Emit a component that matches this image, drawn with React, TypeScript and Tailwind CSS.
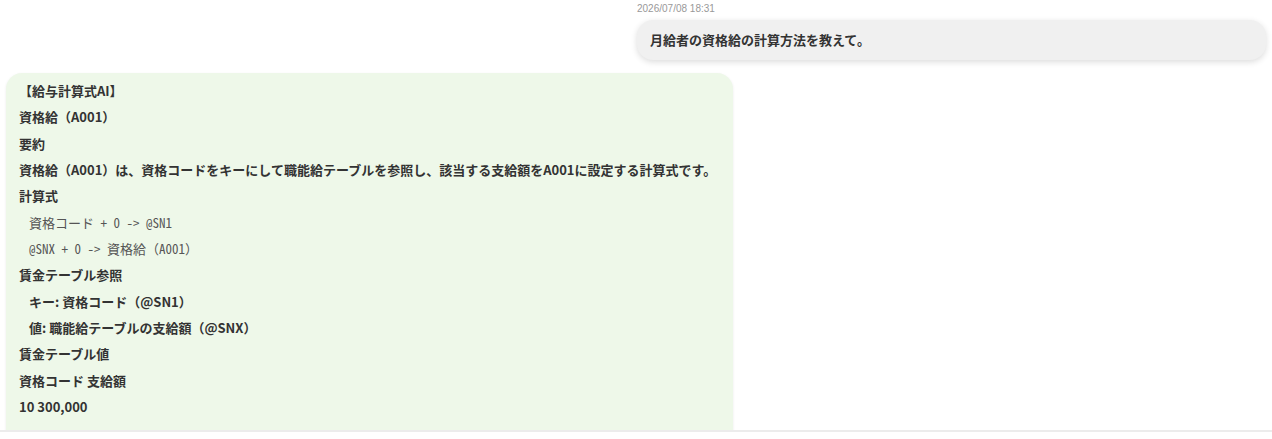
const SANS = "font-['Noto_Sans_CJK_JP','Noto_Sans',sans-serif]";

type Line = { text: string; kind: "bold" | "code" | "indent" };

const LINES: Line[] = [
  { text: "【給与計算式AI】", kind: "bold" },
  { text: "資格給（A001）", kind: "bold" },
  { text: "要約", kind: "bold" },
  { text: "資格給（A001）は、資格コードをキーにして職能給テーブルを参照し、該当する支給額をA001に設定する計算式です。", kind: "bold" },
  { text: "計算式", kind: "bold" },
  { text: "資格コード + 0 -> @SN1", kind: "code" },
  { text: "@SNX + 0 -> 資格給（A001）", kind: "code" },
  { text: "賃金テーブル参照", kind: "bold" },
  { text: "キー: 資格コード（@SN1）", kind: "indent" },
  { text: "値: 職能給テーブルの支給額（@SNX）", kind: "indent" },
  { text: "賃金テーブル値", kind: "bold" },
  { text: "資格コード 支給額", kind: "bold" },
  { text: "10 300,000", kind: "bold" },
];

function AnswerLine({ line }: { line: Line }) {
  if (line.kind === "code") {
    return (
      <div className="pl-[10px] font-['Noto_Sans_Mono_CJK_JP','Noto_Sans_CJK_JP',monospace] text-[13px] font-normal text-[#555] whitespace-pre">
        {line.text}
      </div>
    );
  }
  return (
    <div className={line.kind === "indent" ? "pl-[10px] font-bold" : "font-bold"}>{line.text}</div>
  );
}

export default function App() {
  return (
    <div className={`h-[439px] w-full bg-white text-[#333] ${SANS}`}>
      <div className="h-[432px] overflow-hidden border-b-2 border-[#ececec] px-[6px] flex flex-col">
        <div className="self-end w-[629px] pt-[3px]">
          <div className="pl-0 text-[10px] leading-[12px] text-[#999] font-['Liberation_Sans',Arial,sans-serif]">
            2026/07/08 18:31
          </div>
          <div className="mt-[5px] h-[40px] flex items-center px-[13px] rounded-[16px] bg-[#f0f0f0] shadow-[0_2px_6px_rgba(0,0,0,0.14)] text-[13px] font-bold">
            月給者の資格給の計算方法を教えて。
          </div>
        </div>

        <div className="mt-[13px] w-[727px] shrink-0 rounded-[16px] bg-[#eef8e9] shadow-[0_1px_3px_rgba(0,0,0,0.08)] px-[13px] pt-[5px] pb-[30px] text-[13px] leading-[26.33px]">
          {LINES.map((line, i) => (
            <AnswerLine key={i} line={line} />
          ))}
        </div>
      </div>
    </div>
  );
}
